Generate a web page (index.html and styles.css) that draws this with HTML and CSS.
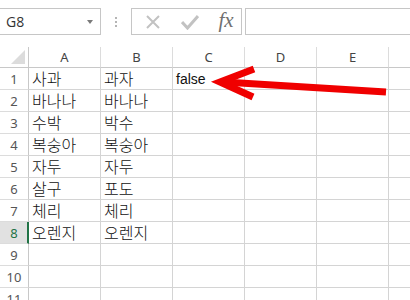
FILE: index.html
```html
<!DOCTYPE html>
<html lang="ko">
<head>
    <meta charset="UTF-8">
    <title>Sheet - G8</title>
    <link rel="stylesheet" href="styles.css">
</head>
<body>
    <div class="sheet">
        <!-- Name box + formula bar -->
        <div class="toolbar">
            <div class="namebox">
                <span class="name">G8</span>
                <span class="caret"></span>
            </div>
            <div class="grip"><span></span><span></span><span></span></div>
            <div class="buttons">
                <svg class="btn-icon" width="16" height="16" viewBox="0 0 16 16">
                    <path d="M2 2 L14 14 M14 2 L2 14" stroke="#c2c2c2" stroke-width="2" fill="none"/>
                </svg>
                <svg class="btn-icon" width="18" height="16" viewBox="0 0 18 16">
                    <path d="M1 8 L6.5 14 L17 2" stroke="#c2c2c2" stroke-width="3" fill="none"/>
                </svg>
                <span class="fx">fx</span>
            </div>
            <div class="formula"></div>
        </div>

        <!-- Cells -->
        <div class="grid">
            <div class="corner"><span class="tri"></span></div>
            <div class="col-head">A</div>
            <div class="col-head">B</div>
            <div class="col-head">C</div>
            <div class="col-head">D</div>
            <div class="col-head">E</div>
            <div class="col-head"></div>

            <div class="row-head">1</div>
            <div class="cell">사과</div><div class="cell">과자</div><div class="cell latin">false</div><div class="cell"></div><div class="cell"></div><div class="cell"></div>

            <div class="row-head">2</div>
            <div class="cell">바나나</div><div class="cell">바나나</div><div class="cell"></div><div class="cell"></div><div class="cell"></div><div class="cell"></div>

            <div class="row-head">3</div>
            <div class="cell">수박</div><div class="cell">박수</div><div class="cell"></div><div class="cell"></div><div class="cell"></div><div class="cell"></div>

            <div class="row-head">4</div>
            <div class="cell">복숭아</div><div class="cell">복숭아</div><div class="cell"></div><div class="cell"></div><div class="cell"></div><div class="cell"></div>

            <div class="row-head">5</div>
            <div class="cell">자두</div><div class="cell">자두</div><div class="cell"></div><div class="cell"></div><div class="cell"></div><div class="cell"></div>

            <div class="row-head">6</div>
            <div class="cell">살구</div><div class="cell">포도</div><div class="cell"></div><div class="cell"></div><div class="cell"></div><div class="cell"></div>

            <div class="row-head">7</div>
            <div class="cell">체리</div><div class="cell">체리</div><div class="cell"></div><div class="cell"></div><div class="cell"></div><div class="cell"></div>

            <div class="row-head active">8</div>
            <div class="cell">오렌지</div><div class="cell">오렌지</div><div class="cell"></div><div class="cell"></div><div class="cell"></div><div class="cell"></div>

            <div class="row-head">9</div>
            <div class="cell"></div><div class="cell"></div><div class="cell"></div><div class="cell"></div><div class="cell"></div><div class="cell"></div>

            <div class="row-head">10</div>
            <div class="cell"></div><div class="cell"></div><div class="cell"></div><div class="cell"></div><div class="cell"></div><div class="cell"></div>

            <div class="row-head">11</div>
            <div class="cell"></div><div class="cell"></div><div class="cell"></div><div class="cell"></div><div class="cell"></div><div class="cell"></div>
        </div>

        <!-- Red annotation arrow drawn over the sheet -->
        <svg class="arrow" width="410" height="300" viewBox="0 0 410 300">
            <path d="M386 92 L224 82" stroke="#f00000" stroke-width="7" fill="none"/>
            <path d="M254 69 L220 82 L253 97" stroke="#f00000" stroke-width="7" fill="none" stroke-linejoin="miter"/>
        </svg>
    </div>
</body>
</html>
```

FILE: styles.css
```css
body {
    margin: 0;
    background-color: white;
    font-family: "Noto Sans", sans-serif;
    overflow: hidden;
}

.sheet {
    position: relative;
    width: 410px;
    height: 300px;
    overflow: hidden;
}

/* Top bar */
.toolbar {
    display: flex;
    align-items: stretch;
    height: 27px;
    padding: 8px 0 12px 0;
}

.namebox {
    width: 102px;
    margin-left: -1px;
    box-sizing: border-box;
    border: 1px solid #c6c6c6;
    display: flex;
    align-items: center;
    justify-content: space-between;
    padding: 0 7px 0 6px;
}

.name {
    font-family: "Open Sans", sans-serif;
    font-size: 14px;
    color: #333;
}

.caret {
    width: 0;
    height: 0;
    border-left: 3px solid transparent;
    border-right: 3px solid transparent;
    border-top: 4px solid #7a7a7a;
    margin-top: 1px;
}

.grip {
    width: 30px;
    display: flex;
    flex-direction: column;
    align-items: center;
    justify-content: center;
    gap: 2px;
}

.grip span {
    width: 2px;
    height: 2px;
    background-color: #b5b5b5;
}

.buttons {
    width: 111px;
    box-sizing: border-box;
    border: 1px solid #c6c6c6;
    display: grid;
    grid-template-columns: 38px 36px 36px;
    align-items: center;
    justify-items: center;
    padding-left: 2px;
}

.fx {
    font-family: "Liberation Serif", serif;
    font-style: italic;
    font-size: 21px;
    color: #707070;
    margin-top: -3px;
}

.formula {
    flex: 1;
    margin-left: 3px;
    border: 1px solid #c6c6c6;
    border-right: none;
}

/* Sheet grid */
.grid {
    display: grid;
    grid-template-columns: 29px repeat(6, 72px);
    grid-template-rows: 21px;
    grid-auto-rows: 22px;
}

.grid > div {
    box-sizing: border-box;
}

.corner {
    border-right: 1px solid #c8c8c8;
    border-bottom: 1px solid #c8c8c8;
    position: relative;
}

.tri {
    position: absolute;
    right: 3px;
    bottom: 3px;
    width: 0;
    height: 0;
    border-left: 14px solid transparent;
    border-bottom: 14px solid #dcdcdc;
}

.col-head {
    border-right: 1px solid #dcdcdc;
    border-bottom: 1px solid #c8c8c8;
    text-align: center;
    font-size: 13px;
    line-height: 20px;
    color: #444;
}

.row-head {
    border-right: 1px solid #c8c8c8;
    border-bottom: 1px solid #dcdcdc;
    text-align: center;
    font-size: 13px;
    line-height: 22px;
    color: #555;
}

.row-head.active {
    background-color: #e1e1e1;
    color: #217346;
    border-right: 2px solid #217346;
    padding-left: 1px;
}

.cell {
    border-right: 1px solid #d4d4d4;
    border-bottom: 1px solid #d4d4d4;
    padding: 0 0 0 3px;
    font-family: "Noto Sans CJK KR", sans-serif;
    font-weight: 300;
    font-size: 16px;
    line-height: 21px;
    color: #111;
    white-space: nowrap;
}

.cell.latin {
    font-family: "Liberation Sans", sans-serif;
    font-weight: normal;
    font-size: 14px;
    line-height: 22px;
}

.arrow {
    position: absolute;
    top: 0;
    left: 0;
}
```
